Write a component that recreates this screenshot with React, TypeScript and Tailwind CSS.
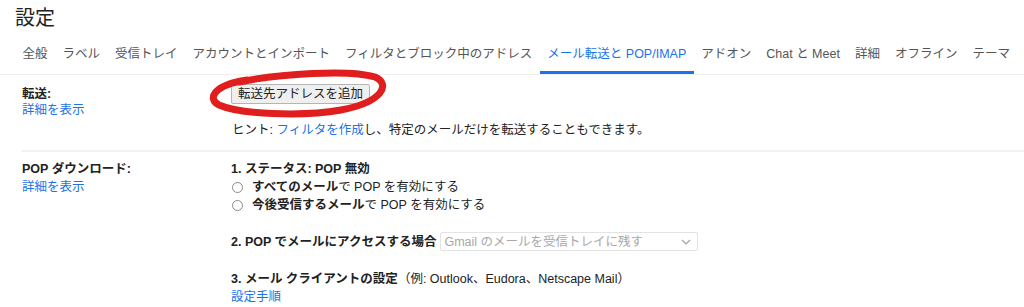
const tabs = [
  "全般",
  "ラベル",
  "受信トレイ",
  "アカウントとインポート",
  "フィルタとブロック中のアドレス",
  "メール転送と POP/IMAP",
  "アドオン",
  "Chat と Meet",
  "詳細",
  "オフライン",
  "テーマ",
];

const font = { fontFamily: '"Liberation Sans", "Noto Sans CJK JP", sans-serif' };

const Radio = ({ bold, rest }: { bold: string; rest: string }) => (
  <label className="flex items-center h-[18px]">
    <span className="w-[11px] h-[11px] rounded-full border border-[#8a8a8a] bg-white mr-[9px] ml-[1px]" />
    <span className="font-bold">{bold}</span>
    <span>{rest}</span>
  </label>
);

const App = () => {
  return (
    <div className="w-[1024px] h-[307px] overflow-hidden bg-white text-[#222] text-[12.5px] leading-[18px]" style={font}>
      <h1 className="text-[20px] leading-[24px] pl-[15px] pt-[6px] h-[37px]">設定</h1>

      <div className="flex pl-[15px] border-b border-[#efefef] h-[38px] whitespace-nowrap">
        {tabs.map((t) => {
          const active = t.startsWith("メール転送");
          return (
            <div
              key={t}
              className={`px-[7.5px] pt-[8px] border-b-[3px] ${active ? "text-[#1a73e8] border-[#1a73e8]" : "text-[#555] border-transparent"}`}
            >
              {t}
            </div>
          );
        })}
      </div>

      <div className="pl-[22px]">
        {/* 転送 */}
        <div className="flex border-b-2 border-[#f1f1f1] pb-[11px] pt-[9px]">
          <div className="w-[209px] pt-[1px]">
            <div className="font-bold">転送:</div>
            <div className="text-[#1a73e8] mt-[-2px]">詳細を表示</div>
          </div>
          <div>
            <div className="relative inline-block">
              <button className="h-[20px] px-[6px] border border-[#b5b5b5] bg-[#efefef] rounded-[2px] text-[12.5px] leading-[18px] text-[#222]">
                転送先アドレスを追加
              </button>
              <svg className="absolute left-[-22px] top-[-12px] pointer-events-none overflow-visible" width="180" height="44" viewBox="0 0 180 44">
                <path
                  d="M 30 10 C 70 2, 140 -3, 166 5 C 182 12, 174 30, 132 38 C 92 45, 30 42, 10 33 C -2 27, 4 13, 38 8"
                  fill="none"
                  stroke="#e01e1e"
                  strokeWidth="7"
                  strokeLinecap="round"
                />
              </svg>
            </div>
            <div className="mt-[17px] pl-[1px]">
              ヒント: <span className="text-[#1a73e8]">フィルタを作成</span>し、特定のメールだけを転送することもできます。
            </div>
          </div>
        </div>

        {/* POP */}
        <div className="flex pt-[8px]">
          <div className="w-[209px]">
            <div className="font-bold">POP ダウンロード:</div>
            <div className="text-[#1a73e8]">詳細を表示</div>
          </div>
          <div>
            <div className="font-bold">1. ステータス: POP 無効</div>
            <Radio bold="すべてのメール" rest="で POP を有効にする" />
            <Radio bold="今後受信するメール" rest="で POP を有効にする" />

            <div className="flex items-center mt-[18px]">
              <span className="font-bold mr-[4px]">2. POP でメールにアクセスする場合</span>
              <div className="w-[258px] h-[19px] border border-[#e3e3e3] rounded-[2px] flex items-center justify-between px-[3px] text-[#a8a8a8]">
                <span>Gmail のメールを受信トレイに残す</span>
                <svg width="10" height="6" viewBox="0 0 10 6" className="mr-[3px]">
                  <path d="M1 1 L5 5 L9 1" fill="none" stroke="#a0a0a0" strokeWidth="1.2" />
                </svg>
              </div>
            </div>

            <div className="mt-[19px]">
              <span className="font-bold">3. メール クライアントの設定</span>
              <span>（例: Outlook、Eudora、Netscape Mail）</span>
            </div>
            <div className="text-[#1a73e8]">設定手順</div>
          </div>
        </div>
      </div>
    </div>
  );
};

export default App;
